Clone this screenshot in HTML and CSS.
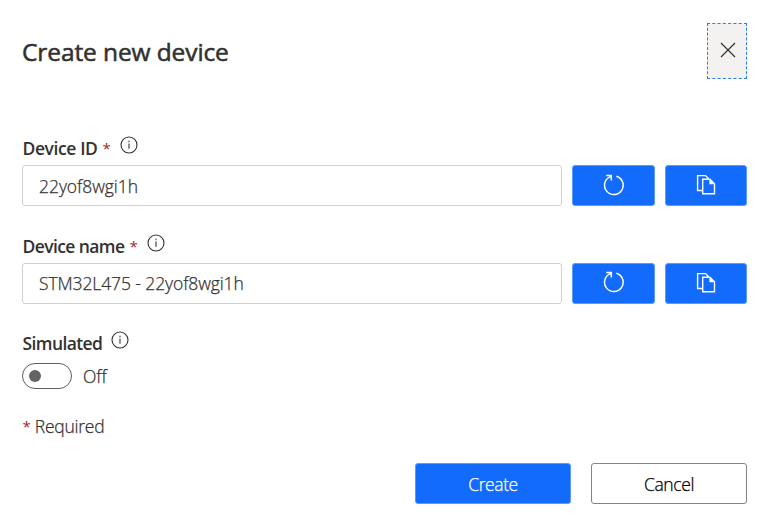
FILE: index.html
```html
<!DOCTYPE html>
<html lang="en">
<head>
<meta charset="utf-8">
<title>Create new device</title>
<link rel="stylesheet" href="styles.css">
</head>
<body>
<svg class="symbols" aria-hidden="true">
  <symbol id="info" viewBox="0 0 18 18"><circle cx="9" cy="9" r="8" fill="none" stroke="currentColor" stroke-width="1.1"/><path d="M9 7.5v5.3M9 4.8v1.4" fill="none" stroke="currentColor" stroke-width="1.1"/></symbol>
  <symbol id="reset" viewBox="0 0 22 22"><path d="M7.4 2.6A9.3 9.3 0 1 0 13.4 2.3M3.2 1.6h5.1v4.9" fill="none" stroke="currentColor" stroke-width="1.5"/></symbol>
  <symbol id="copy" viewBox="0 0 20 21"><path d="M6 16.5H1.6V1.6h7.9l3 3M6.7 5.2h7.2l4.6 4.6v10H6.7z" fill="none" stroke="currentColor" stroke-width="1.4"/><path d="M13.4 4.9v5.3h5.3z" fill="currentColor"/></symbol>
</svg>
<main class="dialog">
  <header class="header">
    <h1 class="title">Create new device</h1>
    <button class="close" aria-label="Close"><svg viewBox="0 0 16 16"><path d="M1 1l14 14M15 1L1 15" fill="none" stroke="currentColor" stroke-width="1.2"/></svg></button>
  </header>
  <section class="field">
    <div class="label"><span class="label-id">Device ID</span><span class="star">*</span><svg class="info"><use href="#info"/></svg></div>
    <div class="row">
      <div class="input"><span class="value-id">22yof8wgi1h</span></div>
      <button class="tool" aria-label="Reset"><svg class="reset"><use href="#reset"/></svg></button>
      <button class="tool copy-tool" aria-label="Copy"><svg class="copy"><use href="#copy"/></svg></button>
    </div>
  </section>
  <section class="field">
    <div class="label"><span class="label-name">Device name</span><span class="star">*</span><svg class="info"><use href="#info"/></svg></div>
    <div class="row">
      <div class="input"><span class="value-name">STM32L475 - 22yof8wgi1h</span></div>
      <button class="tool" aria-label="Reset"><svg class="reset"><use href="#reset"/></svg></button>
      <button class="tool copy-tool" aria-label="Copy"><svg class="copy"><use href="#copy"/></svg></button>
    </div>
  </section>
  <section class="simulated">
    <div class="label"><span class="label-sim">Simulated</span><svg class="info"><use href="#info"/></svg></div>
    <div class="toggle-row"><span class="toggle"><span class="knob"></span></span><span class="state">Off</span></div>
  </section>
  <p class="required"><span class="star">*</span><span class="required-text">Required</span></p>
  <footer class="footer">
    <button class="action primary"><span>Create</span></button>
    <button class="action"><span>Cancel</span></button>
  </footer>
</main>
</body>
</html>
```

FILE: styles.css
```css
* { box-sizing: border-box; }
body { margin: 0; background: #fff; color: #323130; font: 300 17.5px/24px "Open Sans", "Noto Sans", sans-serif; -webkit-text-stroke: 0.25px currentColor; }
.symbols { position: absolute; width: 0; height: 0; }
button { margin: 0; padding: 0; font: inherit; color: inherit; display: flex; align-items: center; justify-content: center; }
.dialog { width: 766px; height: 525px; padding: 23px 19px 0 22px; }
.header { display: flex; justify-content: space-between; height: 56px; }
.title { margin: 11px 0 0; font-size: 24.5px; line-height: 36px; font-weight: 400; letter-spacing: -0.1px; -webkit-text-stroke: 0.55px currentColor; }
.close { width: 40px; height: 56px; background: #f3f2f1; border: 1px dashed #2b7bff; padding: 0 0 2px 1px; }
.close svg { width: 16px; height: 16px; }
.field { margin-top: 27px; }
.header + .field { margin-top: 56px; }
.label { display: flex; height: 30px; padding: 1px 0 0 0.5px; font-weight: 600; letter-spacing: -0.4px; -webkit-text-stroke: 0; }
.star { color: #a4262c; font-size: 15px; font-weight: 400; letter-spacing: 0; -webkit-text-stroke: 0; }
.label .star { margin-left: 5px; }
.info { width: 18px; height: 18px; margin-left: 9px; }
.row { display: flex; height: 41px; }
.input { width: 540px; border: 1px solid #d2d0ce; border-radius: 3px; padding: 8px 16px; letter-spacing: -0.05px; }
.tool { width: 83px; margin-left: 10px; background: #136bfb; color: #fff; border: 1px solid #5a9bff; border-radius: 3px; padding-bottom: 2px; }
.field + .field .tool { padding-bottom: 3px; }
.field + .field .input { padding-top: 7px; }
.copy-tool { width: 82px; }
.reset { width: 22px; height: 22px; }
.copy { width: 20px; height: 21px; }
.value-name { letter-spacing: -0.1px; }
.label-name, .label-sim { letter-spacing: -0.6px; }
.simulated { margin-top: 26px; }
.simulated .label { height: 33px; }
.toggle-row { display: flex; height: 26px; }
.toggle { width: 50px; height: 26px; border: 1px solid #605e5c; border-radius: 13px; padding: 6px; }
.knob { display: block; width: 12px; height: 12px; border-radius: 50%; background: #666463; }
.state { margin: 1px 0 0 11px; letter-spacing: -0.1px; }
.required { display: flex; margin: 25px 0 0 0.5px; height: 24px; letter-spacing: -0.25px; }
.required-text { margin-left: 4px; }
.footer { display: flex; justify-content: flex-end; gap: 20px; margin-top: 25px; }
.action { width: 156px; height: 41px; background: #fff; border: 1px solid #858483; border-radius: 3px; color: #000; letter-spacing: -0.4px; }
.primary { background: #136bfb; border-color: #5a9bff; color: #fff; }
```
